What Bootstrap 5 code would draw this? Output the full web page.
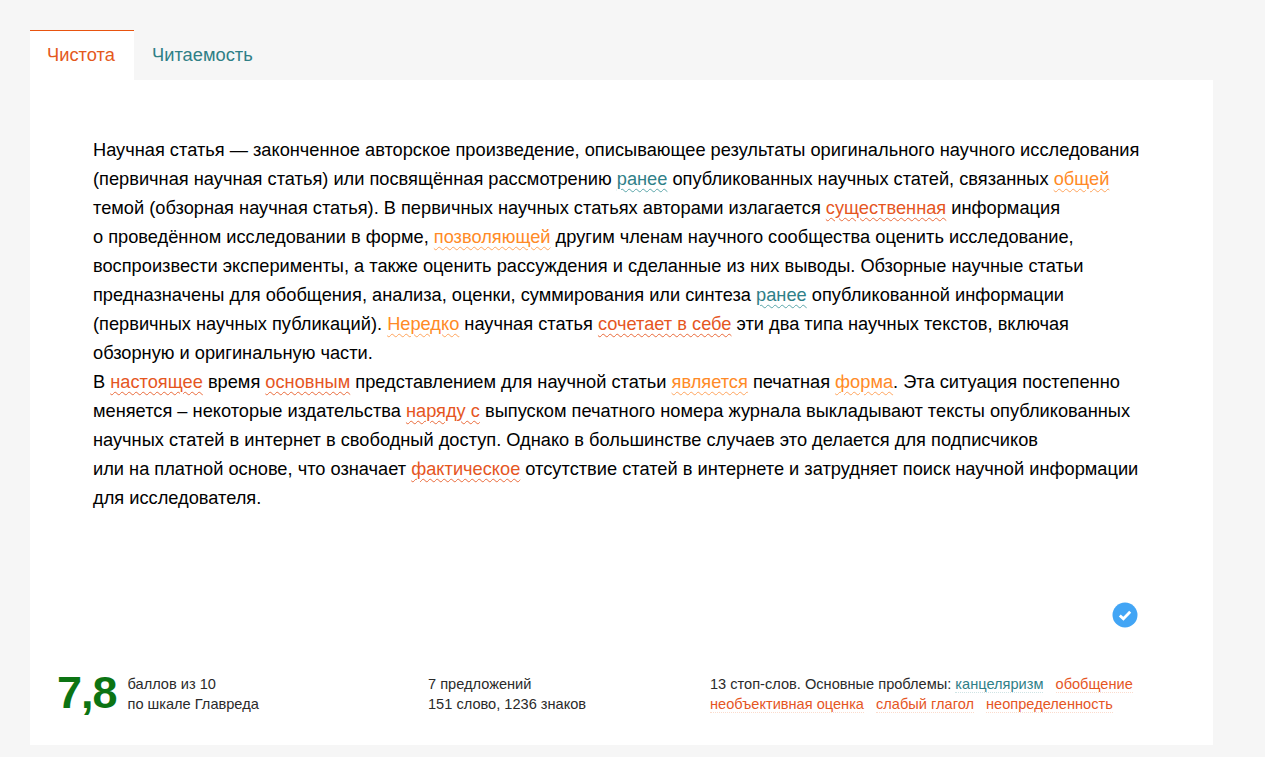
<!DOCTYPE html>
<html lang="ru">
<head>
<meta charset="utf-8">
<title>Главред</title>
<link href="https://cdn.jsdelivr.net/npm/bootstrap@5.3.0/dist/css/bootstrap.min.css" rel="stylesheet">
<style>
html,body{height:100%}
body{background:#f6f6f6;font-family:"Liberation Sans",Arial,sans-serif;color:#000;overflow:hidden}
.app{padding:30px 52px 12px 30px;height:757px}
.tabs{height:50px}
.tabs .nav-link{font-size:18.3px;line-height:20px;padding:14px 18px 15px 17px;border:0;border-top:1px solid transparent;border-radius:0;color:#2f7f86;background:transparent}
.tabs .nav-link.active{color:#e4591c;background:#fff;border-top-color:#e8540f;width:104px}
.tabs .nav-item+.nav-item .nav-link{padding-left:18px}
.sheet{background:#fff;height:665px}
.body-text{padding:55px 63px 0 63px;font-size:18.24px;line-height:29px;height:522px}
.body-text p{margin:0}
.w{text-decoration-line:underline;text-decoration-style:wavy;text-decoration-thickness:1.4px;text-underline-offset:3px}
.teal{color:#2f8088;text-decoration-color:#5aa6aa}
.red{color:#e5561f;text-decoration-color:#ea6a3a}
.org{color:#ff8a26;text-decoration-color:#ffa45c}
.check-row{height:26px;padding-right:75px}
.stats{padding:0 0 0 27px;font-size:14.6px;line-height:20px;color:#2a2a2a;margin-top:46px}
.score{font-size:45px;letter-spacing:-1px;line-height:50px;font-weight:700;color:#0c7413;width:70.5px;margin-top:-6px}
.c1{width:371px}.c2{width:282px}
.tag{white-space:nowrap;border-bottom:1px dotted;margin-right:8px}
.tag.t{color:#2f8088;border-color:#cfe4e5}
.tag.r{color:#e5561f;border-color:#fbdccd}
</style>
</head>
<body>
<div class="app">
  <ul class="nav tabs">
    <li class="nav-item"><a class="nav-link active" href="#">Чистота</a></li>
    <li class="nav-item"><a class="nav-link" href="#">Читаемость</a></li>
  </ul>
  <div class="sheet">
    <div class="body-text">
      <p>Научная статья — законченное авторское произведение, описывающее результаты оригинального научного исследования (первичная научная статья) или посвящённая рассмотрению <span class="w teal">ранее</span> опубликованных научных статей, связанных <span class="w org">общей</span> темой (обзорная научная статья). В первичных научных статьях авторами излагается <span class="w red">существенная</span> информация о&nbsp;проведённом исследовании в форме, <span class="w org">позволяющей</span> другим членам научного сообщества оценить исследование, воспроизвести эксперименты, а также оценить рассуждения и сделанные из них выводы. Обзорные научные статьи предназначены для обобщения, анализа, оценки, суммирования или синтеза <span class="w teal">ранее</span> опубликованной информации (первичных научных публикаций). <span class="w org">Нередко</span> научная статья <span class="w red">сочетает в себе</span> эти два типа научных текстов, включая обзорную и оригинальную части.</p>
      <p>В <span class="w red">настоящее</span> время <span class="w red">основным</span> представлением для научной статьи <span class="w org">является</span> печатная <span class="w org">форма</span>. Эта ситуация постепенно меняется – некоторые издательства <span class="w red">наряду с</span> выпуском печатного номера журнала выкладывают тексты опубликованных научных статей в интернет в свободный доступ. Однако в большинстве случаев это делается для подписчиков или&nbsp;на&nbsp;платной основе, что означает <span class="w red">фактическое</span> отсутствие статей в интернете и затрудняет поиск научной информации для исследователя.</p>
    </div>
    <div class="check-row d-flex justify-content-end">
      <svg width="26" height="26" viewBox="0 0 26 26" aria-hidden="true"><circle cx="13" cy="13" r="12.5" fill="#42a5f5"/><path d="M7.8 13.4l3.6 3.4 6.8-7" fill="none" stroke="#fff" stroke-width="2.8"/></svg>
    </div>
    <div class="stats d-flex">
      <div class="c1 d-flex">
        <div class="score">7,8</div>
        <div>баллов из 10<br>по шкале Главреда</div>
      </div>
      <div class="c2">7 предложений<br>151 слово, 1236 знаков</div>
      <div class="flex-grow-1">13 стоп-слов. Основные проблемы: <span class="tag t">канцеляризм</span> <span class="tag r">обобщение</span><br><span class="tag r">необъективная оценка</span> <span class="tag r">слабый глагол</span> <span class="tag r">неопределенность</span></div>
    </div>
  </div>
</div>
<script src="https://cdn.jsdelivr.net/npm/bootstrap@5.3.0/dist/js/bootstrap.bundle.min.js"></script>
</body>
</html>
